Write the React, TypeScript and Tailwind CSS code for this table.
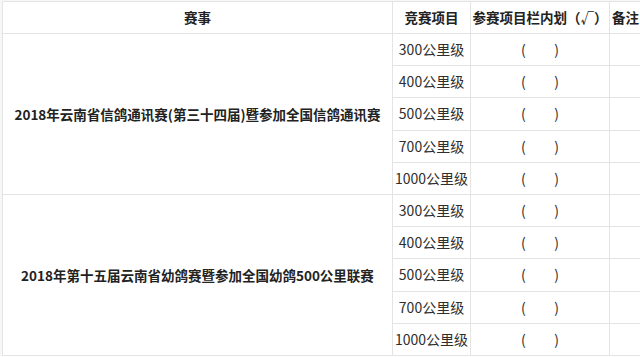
import React from "react";

const dists = ["300公里级", "400公里级", "500公里级", "700公里级", "1000公里级"];
const events = [
  "2018年云南省信鸽通讯赛(第三十四届)暨参加全国信鸽通讯赛",
  "2018年第十五届云南省幼鸽赛暨参加全国幼鸽500公里联赛",
];

const cell = "border-r border-b border-[#e4e4e4] flex items-center justify-center";

export default function App() {
  return (
    <div
      className="w-[640px] h-[358px] overflow-hidden bg-white text-[#222]"
      style={{ fontFamily: '"Noto Sans CJK SC", "Noto Sans", sans-serif' }}
    >
      <div className="pt-[1px] pl-[2px] bg-[#f7f7f7]">
        <div className="grid grid-cols-[390px_78px_139px_40px] grid-rows-[32px_repeat(10,32.2px)] border-t border-l border-[#e4e4e4] bg-white">
          <div className={`${cell} font-bold text-[13.5px]`}>赛事</div>
          <div className={`${cell} font-bold text-[13.5px]`}>竞赛项目</div>
          <div className={`${cell} font-bold text-[13.5px] whitespace-nowrap`}>参赛项目栏内划（√）</div>
          <div className={`${cell} font-bold text-[13.5px] justify-start pl-[2px] whitespace-nowrap`}>备注</div>
          {events.map((ev) => (
            <React.Fragment key={ev}>
              <div className={`${cell} row-span-5 font-bold text-[13.5px] whitespace-nowrap`}>{ev}</div>
              {dists.map((d) => (
                <React.Fragment key={d}>
                  <div className={`${cell} text-[14px] text-[#2e2e2e]`}>{d}</div>
                  <div className={`${cell} text-[14px] text-[#2e2e2e]`}>
                    <span className="w-[38px] flex justify-between"><span>(</span><span>)</span></span>
                  </div>
                  <div className={cell}></div>
                </React.Fragment>
              ))}
            </React.Fragment>
          ))}
        </div>
      </div>
    </div>
  );
}
